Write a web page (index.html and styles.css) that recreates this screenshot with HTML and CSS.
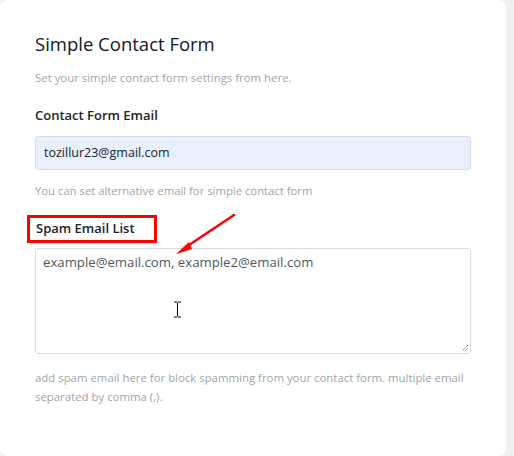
FILE: index.html
```html
<!DOCTYPE html>
<html>
<head>
<meta charset="utf-8">
<link rel="stylesheet" href="styles.css">
</head>
<body>
<div class="card">
  <h2 class="title">Simple Contact Form</h2>
  <p class="desc">Set your simple contact form settings from here.</p>
  <div class="field">
    <label class="label">Contact Form Email</label>
    <div class="input">tozillur23@gmail.com</div>
    <p class="help">You can set alternative email for simple contact form</p>
  </div>
  <div class="field spam">
    <label class="label highlighted">Spam Email List</label>
    <div class="textarea">example@email.com, example2@email.com
      <svg class="grip" width="9" height="9" viewBox="0 0 9 9"><path d="M8 2 L2 8 M8 5 L5 8" stroke="#666" stroke-width="1" stroke-dasharray="1 1"/></svg>
    </div>
    <p class="help help2">add spam email here for block spamming from your contact form. multiple email separated by comma (,).</p>
    <svg class="arrow" width="70" height="50" viewBox="0 0 70 50">
      <path d="M66 3 L18 35" stroke="#f00" stroke-width="2.5" stroke-linecap="round"/>
      <path d="M8 42 L21 30 L24 37 Z" fill="#f00"/>
    </svg>
    <svg class="ibeam" width="9" height="17" viewBox="0 0 9 17">
      <path d="M1 1 H3.5 M5.5 1 H8 M3.5 1 Q4.5 1.5 4.5 2.5 V14.5 Q4.5 15.5 3.5 16 M5.5 1 Q4.5 1.5 4.5 2.5 M4.5 14.5 Q4.5 15.5 5.5 16 M1 16 H3.5 M5.5 16 H8" stroke="#000" stroke-width="1" fill="none"/>
    </svg>
  </div>
</div>
</body>
</html>
```
FILE: styles.css
```css
html, body {
  margin: 0;
  padding: 0;
  background: #f0f0f1;
}
body {
  font-family: "Open Sans", "Noto Sans", sans-serif;
  width: 514px;
  height: 456px;
  overflow: hidden;
}
.card {
  box-sizing: border-box;
  width: 506px;
  height: 456px;
  background: #fff;
  border-radius: 8px;
  padding: 30px 35px 0 35px;
}
.title {
  margin: 0;
  font-size: 18.5px;
  font-weight: 500;
  line-height: 28px;
  color: #101828;
}
.desc {
  margin: 12px 0 0;
  font-size: 11.4px;
  line-height: 16px;
  color: #a0a5aa;
}
.field {
  margin-top: 20px;
  width: 436px;
}
.label {
  display: block;
  font-size: 13px;
  font-weight: 600;
  line-height: 18px;
  color: #1d2327;
}
.input {
  box-sizing: border-box;
  margin-top: 12px;
  height: 34px;
  background: #e8f0fe;
  border: 1px solid #dcdcde;
  border-radius: 3px;
  padding: 0 8px;
  font-size: 12.5px;
  line-height: 32px;
  color: #1d2327;
}
.help {
  margin: 11px 0 0;
  font-size: 11.3px;
  line-height: 19px;
  color: #a0a5aa;
}
.spam {
  position: relative;
  margin-top: 15px;
}
.highlighted {
  display: inline-block;
  margin-left: -8px;
  padding: 1px 6px 3px 6px;
  border: 3px solid #f00;
  width: 112px;
}
.textarea {
  position: relative;
  box-sizing: border-box;
  margin-top: 5px;
  height: 106px;
  border: 1px solid #dcdcde;
  border-radius: 3px;
  padding: 3px 7px;
  font-size: 13.2px;
  line-height: 20px;
  color: #50575e;
}
.grip {
  position: absolute;
  right: 1px;
  bottom: 1px;
}
.help2 {
  margin-top: 14px;
  font-size: 11.4px;
}
.arrow {
  position: absolute;
  left: 133px;
  top: -3px;
}
.ibeam {
  position: absolute;
  left: 138px;
  top: 86px;
}
```
